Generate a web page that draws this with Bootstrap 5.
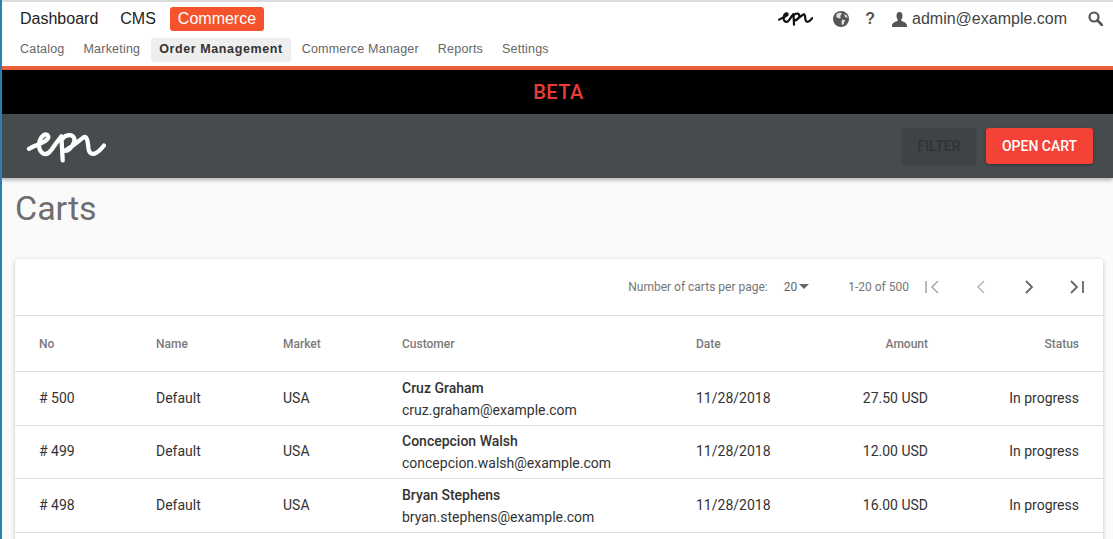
<!DOCTYPE html>
<html lang="en"><head><meta charset="utf-8"><title>Carts</title>
<link rel="stylesheet" href="https://cdn.jsdelivr.net/npm/bootstrap@5.3.0/dist/css/bootstrap.min.css">
<style>
html,body{height:539px;overflow:hidden}
body{background:#fafafa;font-family:Roboto,sans-serif;color:#212121}
.shell{border-left:2px solid #2a7fb0;height:539px;overflow:hidden}
.globalnav{background:#fff;border-top:2px solid #dcdcdc;border-bottom:4px solid #e8603c;height:70px;font-family:"Liberation Sans",Arial,sans-serif}
.toprow{height:34px;padding:5px 10px 0 7px}
.toplink{font-size:16px;color:#222;padding:0 11px;line-height:24px;text-decoration:none;border-radius:3px}
.toplink.on{background:#f4532c;color:#fff;padding:0 8px;margin-left:3px}
.subrow{padding:2px 0 0 10px;height:26px}
.sublink{font-size:12.5px;letter-spacing:.2px;color:#666;padding:0 8px;margin-right:3px;line-height:22px;text-decoration:none;border-radius:3px}
.sublink.on{background:#eee;color:#333;font-weight:700;letter-spacing:.6px}
.topicons{color:#555}
.toplogo{margin-right:20px}
.topglobe{margin-right:16px}
.tophelp{font-size:16px;font-weight:700;margin-right:17px}
.topuser{margin-right:5px}
.topsearch{margin-left:21px;margin-top:-2px}
.adminmail{font-size:16px;color:#444}
.betabar{background:#000;height:44px;color:#ea3d36;font-weight:500;font-size:20px;letter-spacing:.5px;line-height:44px;padding-left:2px}
.appbar{background:#464b4e;height:64px;padding:0 20px 0 24px;box-shadow:0 2px 4px rgba(0,0,0,.3);position:relative}
.applogo{margin-top:3px}
.btn-filter,.btn-opencart{font-size:14px;font-weight:500;height:36px;border:0;border-radius:3px;padding:0}
.btn-filter:disabled{width:74px;background:#3e4346;color:#2f3336;margin-right:10px;box-shadow:0 1px 2px rgba(0,0,0,.2);opacity:1}
.btn-opencart{width:107px;background:#f44336;color:#fff;box-shadow:0 1px 3px rgba(0,0,0,.35)}
.pagetitle{font-size:34px;font-weight:400;color:#6e6e6e;line-height:40px;margin:10px 0 31px 13px}
.cartcard{margin:0 10px 0 13px;border:0;border-radius:4px;background:#fff;box-shadow:0 1px 4px rgba(0,0,0,.22);padding-bottom:30px}
.pager{height:57px;border-bottom:1px solid #e0e0e0;font-size:12px;color:#757575;padding-right:2px}
.pgsize{color:#666;margin:0 39px 0 16px}
.pgcaret{display:inline-block;border:5px solid transparent;border-top-color:#666;border-bottom:0;margin-left:2px;vertical-align:2px}
.pgbtn{width:48px;display:flex;justify-content:center}
.carttable{margin:0;table-layout:fixed;width:100%;font-size:14px;color:#333}
.carttable th{font-size:12px;font-weight:500;color:#7a7a7a;height:55px;vertical-align:middle;padding:2px 0 0;border-bottom:1px solid #e0e0e0}
.carttable td{height:53px;vertical-align:middle;padding:0 0 1px;border-bottom:1px solid #e0e0e0;color:#333;line-height:20px}
.carttable tr:nth-child(odd) td{height:54px;padding-bottom:0}
.carttable td.c4{line-height:22px;padding-top:1px;padding-bottom:0}
.carttable tr:nth-child(odd) td.c4{padding-top:2px}
.carttable .c1{width:141px;padding-left:24px}
.carttable .c2{width:127px}
.carttable .c3{width:119px}
.carttable .c4{width:294px}
.carttable .c5{width:100px}
.carttable .c6{width:132px;text-align:right}
.carttable .c7{text-align:right;padding-right:24px}
.custname{font-weight:500}
</style></head>
<body>
<div class="shell">
<header class="globalnav">
 <div class="toprow d-flex align-items-start">
  <nav class="d-flex"><a class="toplink" href="#">Dashboard</a><a class="toplink" href="#">CMS</a><a class="toplink on" href="#">Commerce</a></nav>
  <div class="ms-auto d-flex align-items-center topicons">
   <svg width="35" height="16" viewBox="50 68 240 100" class="toplogo"><path d="M58 122C78 110 120 100 116 84C112 72 94 80 89 103C85 135 108 150 126 125C136 110 146 96 156 84L160 157M158 92C175 74 202 78 194 103C188 120 174 130 166 128C186 118 206 100 222 88C232 80 236 96 238 120C241 146 262 142 285 112" fill="none" stroke="#111" stroke-width="15" stroke-linecap="round" stroke-linejoin="round"/></svg>
   <svg width="16" height="16" viewBox="0 0 16 16" class="topglobe"><circle cx="8" cy="8" r="8" fill="#555"/><path d="M4 2.500 7.500 1.500 9 3 7 5 8 7 5.500 7.500 3 5.500ZM9 8.500 12 9 11 12.500 9 14.500 8.500 11ZM11 3 14 4.500 14.500 7 12 6Z" fill="#ddd"/></svg>
   <span class="tophelp">?</span>
   <svg width="15" height="15" viewBox="0 0 15 15" class="topuser"><path d="M7.500 0C10 0 10.500 2 10.500 4 10.500 6 9.500 7.500 9 8 9 9.500 15 10 15 13.500V15H0V13.500C0 10 6 9.500 6 8 5.500 7.500 4.500 6 4.500 4 4.500 2 5 0 7.500 0Z" fill="#555"/></svg>
   <span class="adminmail">admin@example.com</span>
   <svg width="15" height="15" viewBox="0 0 15 15" class="topsearch"><circle cx="6" cy="6" r="4.500" fill="none" stroke="#555" stroke-width="2.200"/><path d="M9.500 9.500 14 14" stroke="#555" stroke-width="2.600" stroke-linecap="round"/></svg>
  </div>
 </div>
 <nav class="subrow d-flex">
  <a class="sublink" href="#">Catalog</a><a class="sublink" href="#">Marketing</a><a class="sublink on" href="#">Order Management</a><a class="sublink" href="#">Commerce Manager</a><a class="sublink" href="#">Reports</a><a class="sublink" href="#">Settings</a>
 </nav>
</header>
<div class="betabar text-center">BETA</div>
<div class="appbar d-flex align-items-center">
 <svg width="80" height="33" viewBox="50 68 240 100" class="applogo"><path d="M58 122C78 110 120 100 116 84C112 72 94 80 89 103C85 135 108 150 126 125C136 110 146 96 156 84L160 157M158 92C175 74 202 78 194 103C188 120 174 130 166 128C186 118 206 100 222 88C232 80 236 96 238 120C241 146 262 142 285 112" fill="none" stroke="#fff" stroke-width="13" stroke-linecap="round" stroke-linejoin="round"/></svg>
 <div class="ms-auto d-flex">
  <button class="btn btn-filter" disabled>FILTER</button>
  <button class="btn btn-opencart">OPEN CART</button>
 </div>
</div>
<h1 class="pagetitle">Carts</h1>
<div class="card cartcard">
 <div class="pager d-flex align-items-center justify-content-end">
  <span>Number of carts per page:</span>
  <span class="pgsize">20<i class="pgcaret"></i></span>
  <span>1-20 of 500</span>
  <span class="pgbtn"><svg width="16" height="14" viewBox="0 0 16 14"><path d="M1 1V13M13 1 7 7 13 13" fill="none" stroke="#aaa" stroke-width="1.600"/></svg></span>
  <span class="pgbtn"><svg width="10" height="14" viewBox="0 0 10 14"><path d="M8 1 2 7 8 13" fill="none" stroke="#bbb" stroke-width="1.600"/></svg></span>
  <span class="pgbtn"><svg width="10" height="14" viewBox="0 0 10 14"><path d="M2 1 8 7 2 13" fill="none" stroke="#666" stroke-width="1.800"/></svg></span>
  <span class="pgbtn"><svg width="16" height="14" viewBox="0 0 16 14"><path d="M2 1 8 7 2 13M14 1V13" fill="none" stroke="#666" stroke-width="1.800"/></svg></span>
 </div>
 <table class="table carttable">
  <thead><tr><th class="c1">No</th><th class="c2">Name</th><th class="c3">Market</th><th class="c4">Customer</th><th class="c5">Date</th><th class="c6">Amount</th><th class="c7">Status</th></tr></thead>
  <tbody>
   <tr><td class="c1"># 500</td><td class="c2">Default</td><td class="c3">USA</td><td class="c4"><div class="custname">Cruz Graham</div><div>cruz.graham@example.com</div></td><td class="c5">11/28/2018</td><td class="c6">27.50 USD</td><td class="c7">In progress</td></tr>
   <tr><td class="c1"># 499</td><td class="c2">Default</td><td class="c3">USA</td><td class="c4"><div class="custname">Concepcion Walsh</div><div>concepcion.walsh@example.com</div></td><td class="c5">11/28/2018</td><td class="c6">12.00 USD</td><td class="c7">In progress</td></tr>
   <tr><td class="c1"># 498</td><td class="c2">Default</td><td class="c3">USA</td><td class="c4"><div class="custname">Bryan Stephens</div><div>bryan.stephens@example.com</div></td><td class="c5">11/28/2018</td><td class="c6">16.00 USD</td><td class="c7">In progress</td></tr>
  </tbody>
 </table>
</div>
</div>
<script src="https://cdn.jsdelivr.net/npm/bootstrap@5.3.0/dist/js/bootstrap.bundle.min.js"></script>
</body></html>
